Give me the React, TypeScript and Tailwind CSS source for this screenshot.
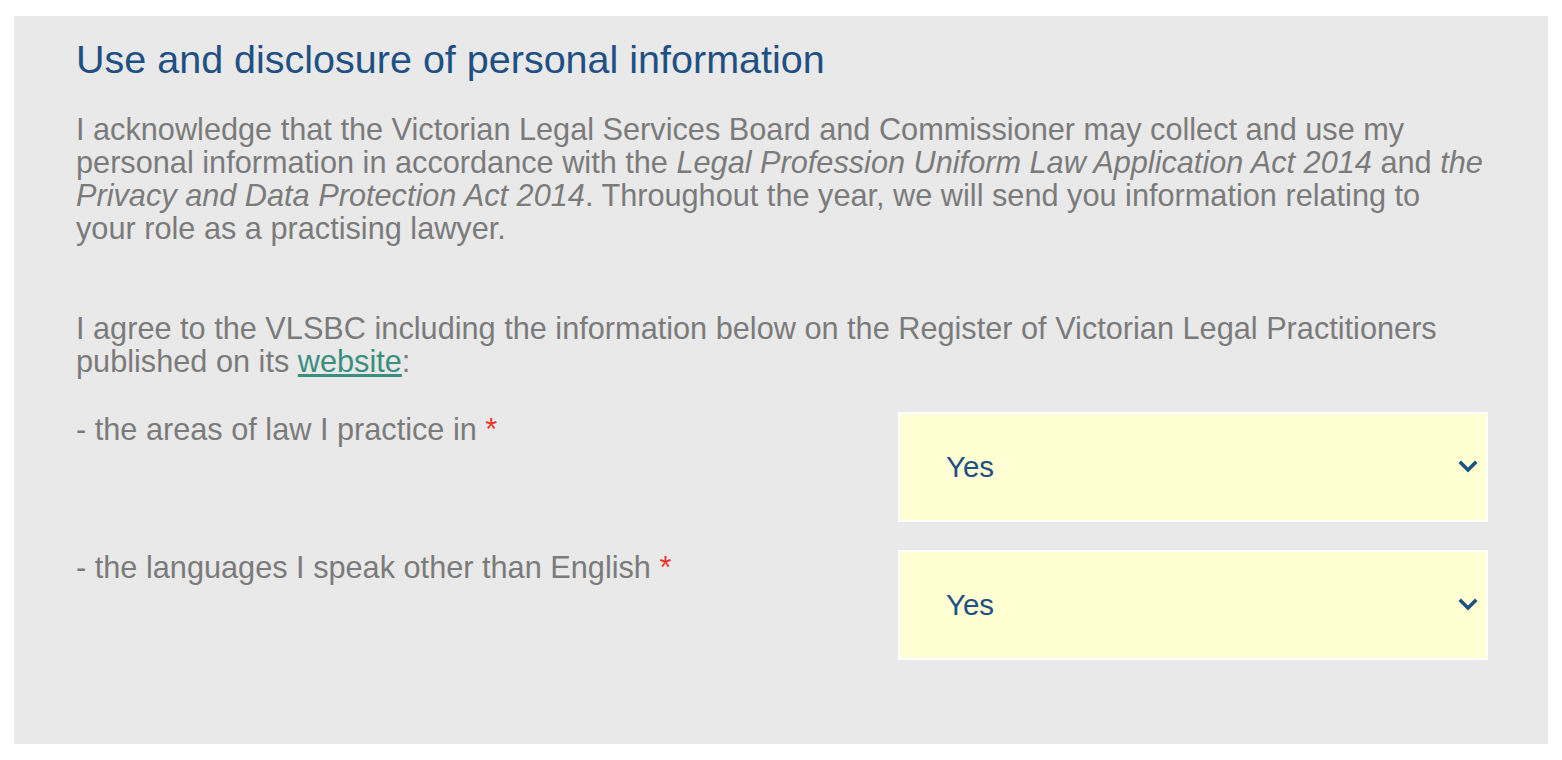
const SelectBox = () => (
  <div className="w-[590px] h-[110px] shrink-0 border-2 border-white bg-[#ffffd3] flex items-center justify-between pl-[46px] pr-[8px]">
    <span className="text-[29.5px] text-[#1f5083]">Yes</span>
    <svg width="20" height="14" viewBox="0 0 20 14">
      <polyline points="3,3 10,10 17,3" fill="none" stroke="#1f5083" strokeWidth="3.6" strokeLinecap="square" />
    </svg>
  </div>
);

const Row = ({ label }: { label: string }) => (
  <div className="flex justify-between items-start">
    <div className="text-[30.7px] leading-[33px] pt-[1px]">
      {label} <span className="text-[#e8372b]">*</span>
    </div>
    <SelectBox />
  </div>
);

export default function App() {
  return (
    <div className="min-h-screen bg-white pt-[16px] px-[14px] font-['Liberation_Sans',Arial,sans-serif]">
      <div className="bg-[#e9e9e9] pl-[62px] pr-[60px] pt-[21px] pb-[84px] text-[#7b7b7b]">
        <h2 className="text-[39.5px] leading-[44px] text-[#1f5083]">Use and disclosure of personal information</h2>
        <p className="mt-[32px] text-[30.7px] leading-[33px]">
          I acknowledge that the Victorian Legal Services Board and Commissioner may collect and use my personal
          information in accordance with the <i>Legal Profession Uniform Law Application Act 2014</i> and{" "}
          <i>the Privacy and Data Protection Act 2014</i>. Throughout the year, we will send you information relating
          to your role as a practising lawyer.
        </p>
        <p className="mt-[67px] text-[30.7px] leading-[33px]">
          I agree to the VLSBC including the information below on the Register of Victorian Legal Practitioners
          published on its{" "}
          <a href="#" className="text-[#3a8f7f] underline">
            website
          </a>
          :
        </p>
        <div className="mt-[34px] flex flex-col gap-[28px]">
          <Row label="- the areas of law I practice in" />
          <Row label="- the languages I speak other than English" />
        </div>
      </div>
    </div>
  );
}
